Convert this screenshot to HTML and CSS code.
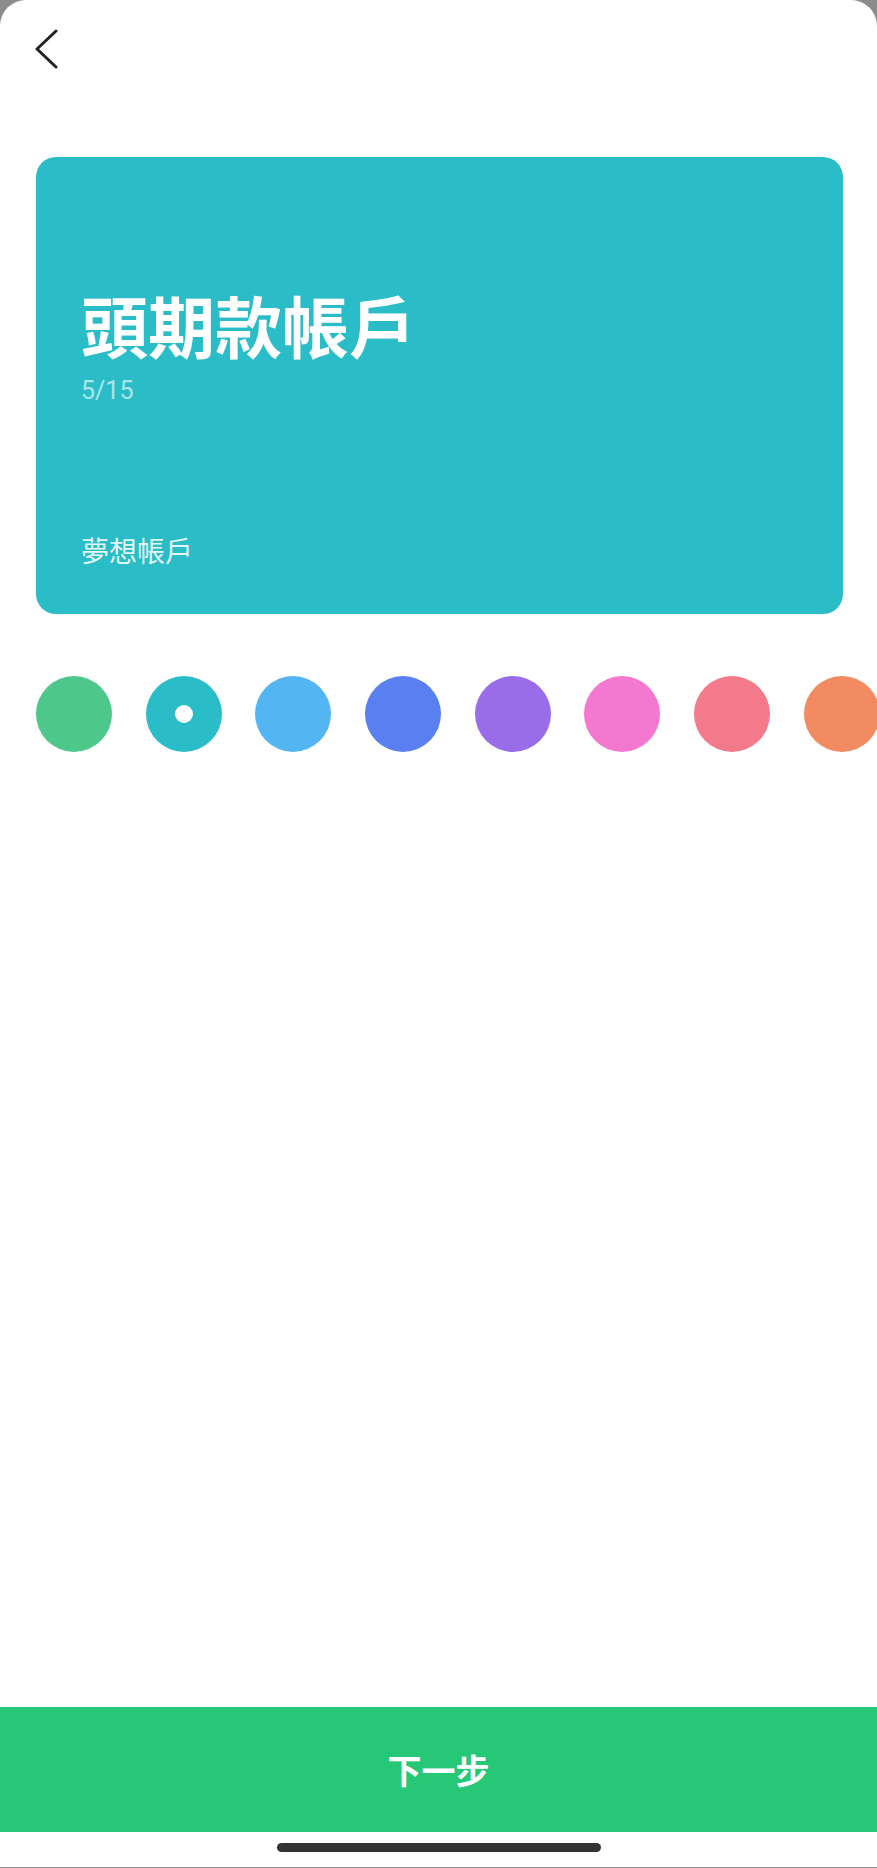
FILE: index.html
```html
<!DOCTYPE html>
<html lang="zh-Hant">
<head>
<meta charset="utf-8">
<link rel="stylesheet" href="styles.css">
</head>
<body>
<div class="screen">
  <header class="topbar">
    <button class="back" aria-label="返回">
      <svg width="24" height="40" viewBox="0 0 24 40"><polyline points="21,2 2,20 21,38" fill="none" stroke="#222" stroke-width="3" stroke-linecap="round" stroke-linejoin="round"/></svg>
    </button>
  </header>
  <section class="card">
    <h1 class="card-title">頭期款帳戶</h1>
    <div class="card-count">5/15</div>
    <div class="card-type">夢想帳戶</div>
  </section>
  <div class="swatches">
    <span class="swatch green"></span>
    <span class="swatch teal selected"></span>
    <span class="swatch sky"></span>
    <span class="swatch blue"></span>
    <span class="swatch purple"></span>
    <span class="swatch pink"></span>
    <span class="swatch rose"></span>
    <span class="swatch orange"></span>
  </div>
  <div class="spacer"></div>
  <button class="next">下一步</button>
  <div class="home-area"><span class="home-indicator"></span></div>
</div>
</body>
</html>
```
FILE: styles.css
```css
* { box-sizing: border-box; }
html, body {
  margin: 0;
  padding: 0;
  background: #8c8c8c;
}
body {
  font-family: Roboto, "Noto Sans CJK TC", sans-serif;
  width: 877px;
  height: 1868px;
  overflow: hidden;
}
.screen {
  width: 877px;
  height: 1867px;
  background: #fff;
  border-radius: 26px 26px 0 0;
  display: flex;
  flex-direction: column;
  overflow: hidden;
}
.topbar {
  height: 157px;
  padding: 29px 0 0 35px;
}
.back {
  border: 0;
  background: none;
  padding: 0;
  width: 24px;
  height: 40px;
  display: block;
}
.back svg { display: block; }
.card {
  margin: 0 34px 0 36px;
  height: 457px;
  background: #2bbdc7;
  border-radius: 20px;
  padding: 0 45px 46px;
  display: flex;
  flex-direction: column;
  color: #fff;
}
.card-title {
  margin: 127px 0 0;
  font-size: 67px;
  line-height: 80px;
  font-weight: 700;
  font-family: "Noto Sans CJK TC", sans-serif;
}
.card-count {
  margin-top: 12px;
  font-size: 25px;
  line-height: 30px;
  color: rgba(255, 255, 255, 0.62);
}
.card-type {
  margin-top: auto;
  font-size: 28px;
  line-height: 36px;
  color: rgba(255, 255, 255, 0.88);
  font-family: "Noto Sans CJK TC", sans-serif;
}
.swatches {
  margin-top: 62px;
  padding-left: 36px;
  display: flex;
  gap: 33.7px;
  overflow: hidden;
}
.swatch {
  flex: 0 0 76px;
  height: 76px;
  border-radius: 50%;
  display: flex;
  align-items: center;
  justify-content: center;
}
.swatch.selected::after {
  content: "";
  width: 18px;
  height: 18px;
  border-radius: 50%;
  background: #fff;
}
.green { background: #4dc88a; }
.teal { background: #2bbdc7; }
.sky { background: #53b5f1; }
.blue { background: #5a7ff0; }
.purple { background: #996dea; }
.pink { background: #f478cf; }
.rose { background: #f27a8b; }
.orange { background: #f28b62; }
.spacer { flex: 1; }
.next {
  flex: 0 0 125px;
  border: 0;
  background: #26c877;
  color: #fff;
  font-family: "Noto Sans CJK TC", sans-serif;
  font-weight: 700;
  font-size: 34px;
  width: 100%;
}
.home-area {
  flex: 0 0 35px;
  display: flex;
  justify-content: center;
  padding-top: 11px;
}
.home-indicator {
  width: 324px;
  height: 9px;
  border-radius: 5px;
  background: #333;
}
```
